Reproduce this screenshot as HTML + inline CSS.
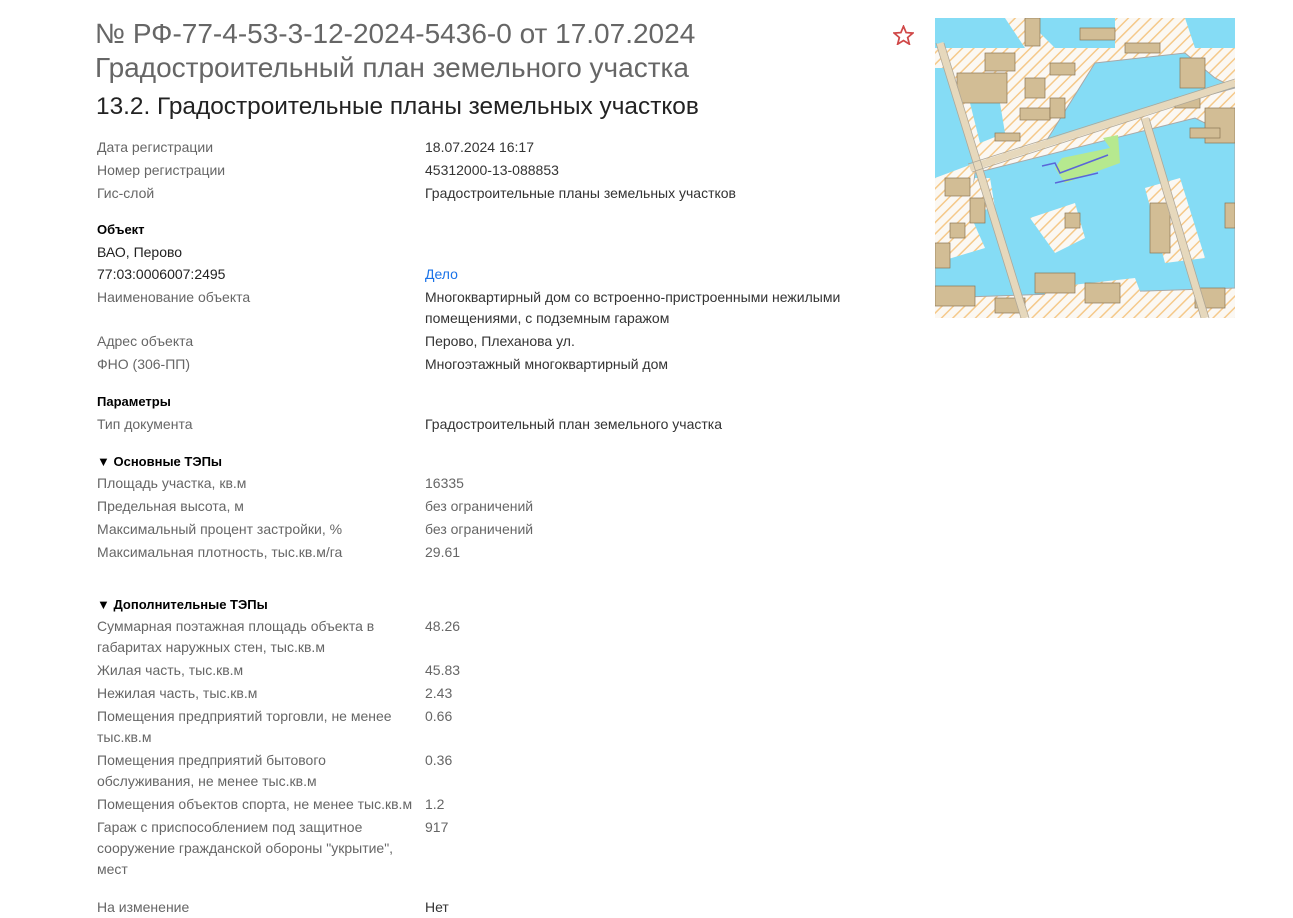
<!DOCTYPE html>
<html><head><meta charset="utf-8"><style>
body{margin:0;width:1293px;height:915px;background:#fff;font-family:"Liberation Sans","Noto Sans CJK SC",sans-serif;position:relative;overflow:hidden}
.a{position:absolute;white-space:nowrap;font-size:14px;line-height:21px}
.l{left:97px;color:#666}
.v{left:425px;color:#333}
.g{left:425px;color:#666}
.b{left:97px;font-weight:bold;color:#000;font-size:13px}
.w{position:relative;top:1px}
</style></head><body>
<div class="a" style="left:95px;top:15px;font-size:28px;line-height:38px;color:#666">№ РФ-77-4-53-3-12-2024-5436-0 от 17.07.2024</div>
<div class="a" style="left:95px;top:49px;font-size:28px;line-height:38px;color:#666">Градостроительный план земельного участка</div>
<div class="a" style="left:96px;top:92px;font-size:24.4px;line-height:30px;color:#222">13.2. Градостроительные планы земельных участков</div>
<svg style="position:absolute;left:893px;top:25px" width="21" height="20" viewBox="0 0 24 23"><path d="M12 1.5l3 7.2 7.8.6-6 5.1 1.9 7.6L12 17.9 5.3 22l1.9-7.6-6-5.1 7.8-.6z" fill="none" stroke="#d04848" stroke-width="2"/></svg>
<div class="w">
<div class="a l" style="top:136px">Дата регистрации</div><div class="a v" style="top:136px">18.07.2024 16:17</div>
<div class="a l" style="top:159px">Номер регистрации</div><div class="a v" style="top:159px">45312000-13-088853</div>
<div class="a l" style="top:182px">Гис-слой</div><div class="a v" style="top:182px">Градостроительные планы земельных участков</div>
<div class="a b" style="top:218px">Объект</div>
<div class="a" style="left:97px;top:241px;color:#222">ВАО, Перово</div>
<div class="a" style="left:97px;top:263px;color:#222">77:03:0006007:2495</div><div class="a" style="left:425px;top:263px;color:#1a73e8">Дело</div>
<div class="a l" style="top:286px">Наименование объекта</div><div class="a v" style="top:286px">Многоквартирный дом со встроенно-пристроенными нежилыми<br>помещениями, с подземным гаражом</div>
<div class="a l" style="top:330px">Адрес объекта</div><div class="a v" style="top:330px">Перово, Плеханова ул.</div>
<div class="a l" style="top:353px">ФНО (306-ПП)</div><div class="a v" style="top:353px">Многоэтажный многоквартирный дом</div>
<div class="a b" style="top:390px">Параметры</div>
<div class="a l" style="top:413px">Тип документа</div><div class="a v" style="top:413px">Градостроительный план земельного участка</div>
<div class="a b" style="top:450px">▼ Основные ТЭПы</div>
<div class="a l" style="top:472px">Площадь участка, кв.м</div><div class="a g" style="top:472px">16335</div>
<div class="a l" style="top:495px">Предельная высота, м</div><div class="a g" style="top:495px">без ограничений</div>
<div class="a l" style="top:518px">Максимальный процент застройки, %</div><div class="a g" style="top:518px">без ограничений</div>
<div class="a l" style="top:541px">Максимальная плотность, тыс.кв.м/га</div><div class="a g" style="top:541px">29.61</div>
<div class="a b" style="top:593px">▼ Дополнительные ТЭПы</div>
<div class="a l" style="top:615px">Суммарная поэтажная площадь объекта в<br>габаритах наружных стен, тыс.кв.м</div><div class="a g" style="top:615px">48.26</div>
<div class="a l" style="top:659px">Жилая часть, тыс.кв.м</div><div class="a g" style="top:659px">45.83</div>
<div class="a l" style="top:682px">Нежилая часть, тыс.кв.м</div><div class="a g" style="top:682px">2.43</div>
<div class="a l" style="top:705px">Помещения предприятий торговли, не менее<br>тыс.кв.м</div><div class="a g" style="top:705px">0.66</div>
<div class="a l" style="top:749px">Помещения предприятий бытового<br>обслуживания, не менее тыс.кв.м</div><div class="a g" style="top:749px">0.36</div>
<div class="a l" style="top:793px">Помещения объектов спорта, не менее тыс.кв.м</div><div class="a g" style="top:793px">1.2</div>
<div class="a l" style="top:816px">Гараж с приспособлением под защитное<br>сооружение гражданской обороны "укрытие",<br>мест</div><div class="a g" style="top:816px">917</div>
<div class="a l" style="top:896px">На изменение</div><div class="a v" style="top:896px">Нет</div>
</div>
<svg style="position:absolute;left:935px;top:18px" width="300" height="300" viewBox="0 0 300 300">
<defs><pattern id="h" width="8" height="8" patternUnits="userSpaceOnUse" patternTransform="rotate(-45)"><rect width="8" height="8" fill="#fbf8f3"/><rect width="8" height="1.5" fill="#f5c98a"/></pattern></defs>
<rect width="300" height="300" fill="url(#h)"/>
<path d="M0 0H70L90 30H0Z" fill="#85dcf5"/>
<path d="M100 0H180V30H120L100 10Z" fill="#85dcf5"/>
<path d="M250 0H300V30H260Z" fill="#85dcf5"/>
<path d="M160 45L250 35L280 60L300 70L150 110L110 125Z" fill="#85dcf5" stroke="#a8a8a8"/>
<path d="M0 50H15L40 145L0 160Z" fill="#85dcf5"/>
<path d="M35 85H65L70 115L45 125Z" fill="#85dcf5"/>
<path d="M40 155L260 100L300 120L300 270L0 280L0 230L30 235Z" fill="#85dcf5" stroke="#a8a8a8"/>
<path d="M40 160L55 160L60 190L30 195Z" fill="url(#h)"/>
<path d="M95 200L140 185L150 220L120 235Z" fill="url(#h)"/>
<path d="M210 170L245 160L270 240L230 245Z" fill="url(#h)"/>
<path d="M110 270L200 260L215 300H110Z" fill="url(#h)"/>
<path d="M0 190L30 185L50 230L0 245Z" fill="url(#h)"/>
<path d="M120 150L127 140L175 130L168 120L183 117L185 145L130 165Z" fill="#b6e98f"/>
<path d="M107 148L120 145L125 155L173 137M120 165L163 155" stroke="#5a66d8" stroke-width="1.5" fill="none"/>
<g fill="#d2bd95" stroke="#8a7555" stroke-width=".7">
<rect x="22" y="55" width="50" height="30"/><rect x="50" y="35" width="30" height="18"/><rect x="90" y="60" width="20" height="20"/><rect x="115" y="45" width="25" height="12"/><rect x="85" y="90" width="30" height="12"/><rect x="60" y="115" width="25" height="8"/><rect x="145" y="10" width="35" height="12"/><rect x="190" y="25" width="35" height="10"/><rect x="245" y="40" width="25" height="30"/><rect x="270" y="90" width="30" height="35"/><rect x="240" y="80" width="25" height="10"/><rect x="255" y="110" width="30" height="10"/><rect x="90" y="0" width="15" height="28"/><rect x="115" y="80" width="15" height="20"/><rect x="10" y="160" width="25" height="18"/><rect x="35" y="180" width="15" height="25"/><rect x="15" y="205" width="15" height="15"/><rect x="0" y="225" width="15" height="25"/><rect x="100" y="255" width="40" height="20"/><rect x="150" y="265" width="35" height="20"/><rect x="215" y="185" width="20" height="50"/><rect x="290" y="185" width="10" height="25"/><rect x="260" y="270" width="30" height="20"/><rect x="0" y="268" width="40" height="20"/><rect x="130" y="195" width="15" height="15"/><rect x="60" y="280" width="30" height="15"/></g>
<g fill="none" stroke="#e6d8bc" stroke-width="7"><path d="M5 25L90 300"/><path d="M210 100L270 300"/><path d="M35 150L300 65"/></g>
<g fill="none" stroke="#b0a898" stroke-width=".8"><path d="M1 25L86 300M9 25L94 300M206 100L266 300M214 100L274 300M33 146L300 61M37 154L300 69"/></g>
</svg>
</body></html>
